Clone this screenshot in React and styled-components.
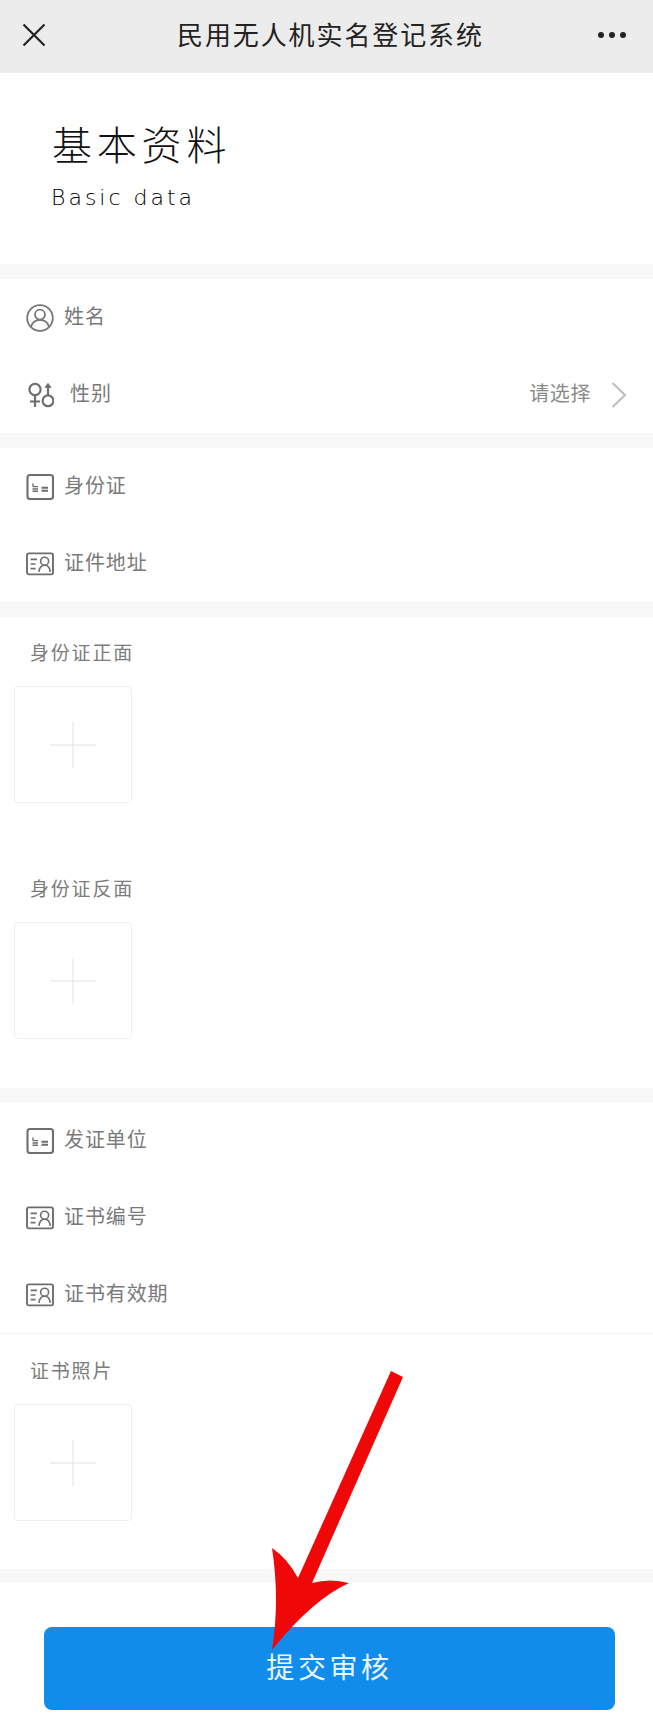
import React from 'react';
import styled, { createGlobalStyle } from 'styled-components';

const GlobalStyle = createGlobalStyle`
  html, body {
    margin: 0;
    padding: 0;
    background: #fff;
  }
  * {
    box-sizing: border-box;
  }
`;

const FONT = '"Noto Sans CJK SC", "Noto Sans", sans-serif';

const Page = styled.div`
  position: relative;
  width: 653px;
  height: 1728px;
  overflow: hidden;
  background: #fff;
  font-family: ${FONT};
`;

const Header = styled.header`
  height: 73px;
  padding: 0 26px 3px 22px;
  display: flex;
  align-items: center;
  background: #ececec;
`;

const HeaderTitle = styled.h1`
  margin: 0 auto 0 131px;
  padding-bottom: 3px;
  font-size: 26px;
  line-height: 36px;
  font-weight: 400;
  letter-spacing: 1.9px;
  color: #222;
`;

const Hero = styled.section`
  height: 191px;
  padding: 44px 0 0 52px;
`;

const HeroTitle = styled.h2`
  margin: 0;
  font-size: 40px;
  line-height: 52px;
  font-weight: 300;
  letter-spacing: 4.8px;
  color: #111;
`;

const HeroSub = styled.p`
  margin: 15px 0 0 -1px;
  font-family: "DejaVu Sans", sans-serif;
  font-size: 22px;
  line-height: 28px;
  font-weight: 300;
  letter-spacing: 3px;
  color: #000;
`;

const Band = styled.div`
  height: ${(p) => p.$h || 15}px;
  background: #f8f8f8;
`;

const Row = styled.div`
  height: 77px;
  padding: 0 26px 0 26px;
  display: flex;
  align-items: center;
  gap: ${(p) => p.$gap || 10}px;
`;

const RowLabel = styled.span`
  padding-bottom: 4px;
  font-size: 20px;
  line-height: 26px;
  letter-spacing: 0.9px;
  color: #7a7a7a;
`;

const RowRight = styled.div`
  margin-left: auto;
  display: flex;
  align-items: center;
  gap: 20px;
`;

const Placeholder = styled.span`
  padding-bottom: 4px;
  font-size: 20px;
  line-height: 26px;
  letter-spacing: 0.6px;
  color: #8a8a8a;
`;

const Divider = styled.div`
  height: 1px;
  background: #f4f4f4;
`;

const UploadSection = styled.section`
  padding: ${(p) => p.$top}px 0 ${(p) => p.$bottom}px 14px;
  display: flex;
  flex-direction: column;
  gap: 72px;
`;

const Field = styled.div`
  display: flex;
  flex-direction: column;
  gap: 21px;
`;

const FieldLabel = styled.div`
  padding-left: 16px;
  font-size: 19px;
  line-height: 26px;
  letter-spacing: 1.8px;
  color: #7c7c7c;
`;

const UploadBox = styled.div`
  width: 118px;
  height: 117px;
  display: flex;
  align-items: center;
  justify-content: center;
  border: 1px solid #efefef;
  border-radius: 4px;
  background: #fff;
`;

const Footer = styled.div`
  padding: 45px 38px 0 44px;
`;

const SubmitButton = styled.button`
  width: 571px;
  height: 83px;
  padding: 0 0 6px;
  border: none;
  border-radius: 8px;
  background: #128cea;
  color: #e8f6ff;
  font-family: ${FONT};
  font-size: 28px;
  letter-spacing: 3.6px;
`;

const ArrowOverlay = styled.svg`
  position: absolute;
  left: 260px;
  top: 1360px;
  pointer-events: none;
`;

const CloseIcon = () => (
  <svg width="24" height="24" viewBox="0 0 24 24" fill="none" stroke="#222" strokeWidth="2.2">
    <path d="M1.5 1.5 L22.5 22.5 M22.5 1.5 L1.5 22.5" />
  </svg>
);

const MoreIcon = () => (
  <svg width="30" height="8" viewBox="0 0 30 8" fill="#222">
    <circle cx="4" cy="4" r="3" />
    <circle cx="15" cy="4" r="3" />
    <circle cx="26" cy="4" r="3" />
  </svg>
);

const UserIcon = () => (
  <svg width="28" height="28" viewBox="0 0 28 28" fill="none" stroke="#777" strokeWidth="1.8">
    <circle cx="14" cy="14" r="12.8" />
    <circle cx="14" cy="10.6" r="5" />
    <path d="M4.8 23 C6.2 18 10 15.8 14 15.8 C18 15.8 21.8 18 23.2 23" />
  </svg>
);

const GenderIcon = () => (
  <svg width="28" height="28" viewBox="0 0 28 28" fill="none" stroke="#6e6e6e" strokeWidth="2.2">
    <circle cx="9" cy="8.5" r="5.6" />
    <path d="M9 14 V26 M4 20.5 H14" />
    <circle cx="22" cy="19.8" r="5.4" />
    <path d="M22 14 V4" />
    <path d="M19.2 6.4 L22 2.4 L24.8 6.4 Z" fill="#6e6e6e" strokeWidth="1" />
  </svg>
);

const CardIcon = () => (
  <svg width="28" height="28" viewBox="0 0 28 28" fill="none" stroke="#6e6e6e">
    <rect x="1.5" y="2" width="25.5" height="24" rx="2.5" strokeWidth="2.1" />
    <path d="M7 10.5 V13 M6.5 13.6 H12 M6.5 16 H12 M6.5 18.2 H12" strokeWidth="1.4" />
    <path d="M15.5 14.8 H22 M15.5 17.8 H22" strokeWidth="1.9" />
  </svg>
);

const PersonCardIcon = () => (
  <svg width="28" height="28" viewBox="0 0 28 28" fill="none" stroke="#6e6e6e">
    <rect x="1" y="3.4" width="26" height="21" rx="1.8" strokeWidth="1.9" />
    <path d="M4.6 9.4 H11 M4.6 14 H9.5 M4.6 18.6 H9.5" strokeWidth="1.6" />
    <circle cx="18.6" cy="11.2" r="4" strokeWidth="1.6" />
    <path d="M13 21.8 C13.4 17.6 15.6 15.2 18.6 15.2 C21.6 15.2 23.8 17.6 24.2 21.8" strokeWidth="1.6" />
  </svg>
);

const ChevronIcon = () => (
  <svg width="16" height="26" viewBox="0 0 16 26" fill="none" stroke="#c0c0c0" strokeWidth="2.2">
    <path d="M1.5 1 L14 13 L1.5 25" />
  </svg>
);

const PlusIcon = () => (
  <svg width="46" height="46" viewBox="0 0 46 46" stroke="#e2e2e2" strokeWidth="1">
    <path d="M0 23 H46 M23 0 V46" />
  </svg>
);

const RedArrow = () => (
  <ArrowOverlay width="160" height="300" viewBox="260 1360 160 300">
    <path
      d="M391 1371 L403 1377 L312 1583 Q330 1578 349 1583 Q312 1600 272 1650 Q280 1600 272 1548 Q287 1558 298 1578 Z"
      fill="#f00808"
    />
  </ArrowOverlay>
);

const Upload = ({ label }) => (
  <Field>
    <FieldLabel>{label}</FieldLabel>
    <UploadBox>
      <PlusIcon />
    </UploadBox>
  </Field>
);

const App = () => (
  <Page>
    <GlobalStyle />
    <Header>
      <CloseIcon />
      <HeaderTitle>民用无人机实名登记系统</HeaderTitle>
      <MoreIcon />
    </Header>

    <Hero>
      <HeroTitle>基本资料</HeroTitle>
      <HeroSub>Basic data</HeroSub>
    </Hero>
    <Band />

    <Row>
      <UserIcon />
      <RowLabel>姓名</RowLabel>
    </Row>
    <Row $gap={16}>
      <GenderIcon />
      <RowLabel>性别</RowLabel>
      <RowRight>
        <Placeholder>请选择</Placeholder>
        <ChevronIcon />
      </RowRight>
    </Row>
    <Band />

    <Row>
      <CardIcon />
      <RowLabel>身份证</RowLabel>
    </Row>
    <Row>
      <PersonCardIcon />
      <RowLabel>证件地址</RowLabel>
    </Row>
    <Band />

    <UploadSection $top={22} $bottom={49}>
      <Upload label="身份证正面" />
      <Upload label="身份证反面" />
    </UploadSection>
    <Band $h={14} />

    <Row>
      <CardIcon />
      <RowLabel>发证单位</RowLabel>
    </Row>
    <Row>
      <PersonCardIcon />
      <RowLabel>证书编号</RowLabel>
    </Row>
    <Row>
      <PersonCardIcon />
      <RowLabel>证书有效期</RowLabel>
    </Row>
    <Divider />

    <UploadSection $top={23} $bottom={48}>
      <Upload label="证书照片" />
    </UploadSection>
    <Band $h={13} />

    <Footer>
      <SubmitButton>提交审核</SubmitButton>
    </Footer>

    <RedArrow />
  </Page>
);

export default App;
